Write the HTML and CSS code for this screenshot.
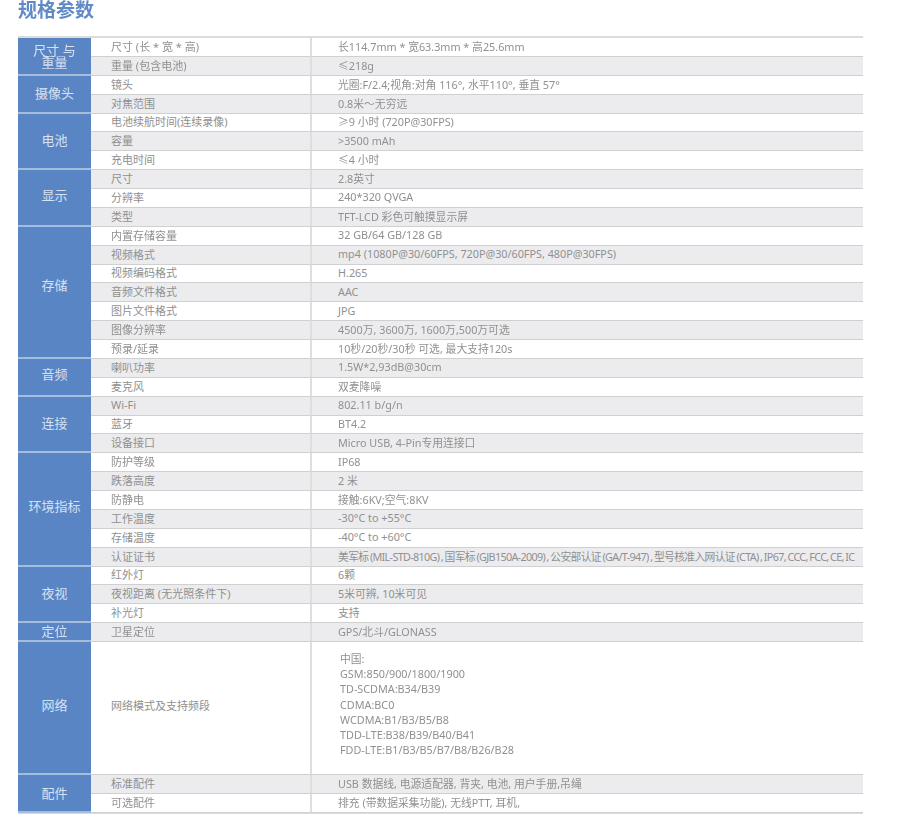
FILE: index.html
```html
<!DOCTYPE html>
<html lang="zh">
<head>
<meta charset="utf-8">
<title>规格参数</title>
<link rel="stylesheet" href="styles.css">
</head>
<body>
<main class="page">
<h1 class="title">规格参数</h1>
<section class="specs">
  <div class="group span2 tight">尺寸 与<br>重量</div>
  <div class="label">尺寸 (长 * 宽 * 高)</div><div class="value">长114.7mm * 宽63.3mm * 高25.6mm</div>
  <div class="label alt">重量 (包含电池)</div><div class="value alt">≤218g</div>

  <div class="group span2">摄像头</div>
  <div class="label">镜头</div><div class="value">光圈:F/2.4;视角:对角 116°, 水平110°, 垂直 57°</div>
  <div class="label alt">对焦范围</div><div class="value alt">0.8米～无穷远</div>

  <div class="group span3">电池</div>
  <div class="label">电池续航时间(连续录像)</div><div class="value">≥9 小时 (720P@30FPS)</div>
  <div class="label alt">容量</div><div class="value alt">&gt;3500 mAh</div>
  <div class="label">充电时间</div><div class="value">≤4 小时</div>

  <div class="group span3 lift">显示</div>
  <div class="label alt">尺寸</div><div class="value alt">2.8英寸</div>
  <div class="label">分辨率</div><div class="value">240*320 QVGA</div>
  <div class="label alt">类型</div><div class="value alt">TFT-LCD 彩色可触摸显示屏</div>

  <div class="group span7 lift-more">存储</div>
  <div class="label">内置存储容量</div><div class="value">32 GB/64 GB/128 GB</div>
  <div class="label alt">视频格式</div><div class="value alt">mp4 (1080P@30/60FPS, 720P@30/60FPS, 480P@30FPS)</div>
  <div class="label">视频编码格式</div><div class="value">H.265</div>
  <div class="label alt">音频文件格式</div><div class="value alt">AAC</div>
  <div class="label">图片文件格式</div><div class="value">JPG</div>
  <div class="label alt">图像分辨率</div><div class="value alt">4500万, 3600万, 1600万,500万可选</div>
  <div class="label">预录/延录</div><div class="value">10秒/20秒/30秒 可选, 最大支持120s</div>

  <div class="group span2 lift">音频</div>
  <div class="label alt">喇叭功率</div><div class="value alt">1.5W*2,93dB@30cm</div>
  <div class="label">麦克风</div><div class="value">双麦降噪</div>

  <div class="group span3">连接</div>
  <div class="label alt">Wi-Fi</div><div class="value alt">802.11 b/g/n</div>
  <div class="label">蓝牙</div><div class="value">BT4.2</div>
  <div class="label alt">设备接口</div><div class="value alt">Micro USB, 4-Pin专用连接口</div>

  <div class="group span6 lift">环境指标</div>
  <div class="label">防护等级</div><div class="value">IP68</div>
  <div class="label alt">跌落高度</div><div class="value alt">2 米</div>
  <div class="label">防静电</div><div class="value">接触:6KV;空气:8KV</div>
  <div class="label alt">工作温度</div><div class="value alt">-30°C to +55°C</div>
  <div class="label">存储温度</div><div class="value">-40°C to +60°C</div>
  <div class="label alt">认证证书</div><div class="value alt narrow">美军标 (MIL-STD-810G) , 国军标 (GJB150A-2009) , 公安部认证 (GA/T-947) , 型号核准入网认证 (CTA) , IP67, CCC, FCC, CE, IC</div>

  <div class="group span3">夜视</div>
  <div class="label">红外灯</div><div class="value">6颗</div>
  <div class="label alt">夜视距离 (无光照条件下)</div><div class="value alt">5米可辨, 10米可见</div>
  <div class="label">补光灯</div><div class="value">支持</div>

  <div class="group">定位</div>
  <div class="label alt">卫星定位</div><div class="value alt">GPS/北斗/GLONASS</div>

  <div class="group lift">网络</div>
  <div class="label bandlabel">网络模式及支持频段</div>
  <div class="value bands">
    <div>中国:</div>
    <div>GSM:850/900/1800/1900</div>
    <div>TD-SCDMA:B34/B39</div>
    <div>CDMA:BC0</div>
    <div>WCDMA:B1/B3/B5/B8</div>
    <div>TDD-LTE:B38/B39/B40/B41</div>
    <div>FDD-LTE:B1/B3/B5/B7/B8/B26/B28</div>
  </div>

  <div class="group span2">配件</div>
  <div class="label alt">标准配件</div><div class="value alt">USB 数据线, 电源适配器, 背夹, 电池, 用户手册,吊绳</div>
  <div class="label">可选配件</div><div class="value">排充 (带数据采集功能), 无线PTT, 耳机,</div>
</section>
</main>
</body>
</html>
```
FILE: styles.css
```css
html, body {
  margin: 0;
  background: #fff;
}
.page {
  width: 900px;
  height: 819px;
  overflow: hidden;
  font-family: "Noto Sans", "Noto Sans CJK SC", sans-serif;
  filter: blur(0.55px);
}
.title {
  margin: 0 0 0 18px;
  height: 36px;
  font-size: 19px;
  line-height: 18px;
  font-weight: 700;
  color: #5f8ac6;
  font-family: "Noto Sans CJK SC", sans-serif;
}
.specs {
  margin-left: 18px;
  width: 845px;
  display: grid;
  grid-template-columns: 73px 219px 553px;
  grid-template-rows: repeat(32, 18.875px) 133px repeat(2, 19px);
  border-top: 2px solid #dcdcdc;
  border-bottom: 1px solid #dcdcdc;
  box-sizing: content-box;
}
.group {
  grid-column: 1;
  display: flex;
  align-items: center;
  justify-content: center;
  text-align: center;
  background: #5a85c5;
  color: #d6e1f1;
  font-size: 13px;
  padding-bottom: 2px;
  border-bottom: 2px solid #a6bcdd;
  box-sizing: border-box;
}
.span2 { grid-row: span 2; }
.span3 { grid-row: span 3; }
.span6 { grid-row: span 6; }
.span7 { grid-row: span 7; }
.tight { line-height: 12px; padding-bottom: 0; }
.lift { padding-bottom: 6px; }
.lift-more { padding-bottom: 15px; }
.label, .value {
  display: flex;
  align-items: center;
  color: #909090;
  font-size: 10.8px;
  white-space: nowrap;
  background: #fff;
  padding-bottom: 2px;
  border-bottom: 1.5px solid #d0d0d0;
  box-sizing: border-box;
  overflow: hidden;
}
.label {
  grid-column: 2;
  padding-left: 20px;
  font-size: 11px;
}
.value {
  grid-column: 3;
  padding-left: 26px;
  border-left: 2px solid #dedede;
}
.alt {
  background: #ececee;
}
.narrow {
  letter-spacing: -0.67px;
  word-spacing: -0.6px;
}
.bandlabel {
  padding-bottom: 6px;
}
.bands {
  display: block;
  padding: 9px 0 0 28px;
  line-height: 15.2px;
}
```
